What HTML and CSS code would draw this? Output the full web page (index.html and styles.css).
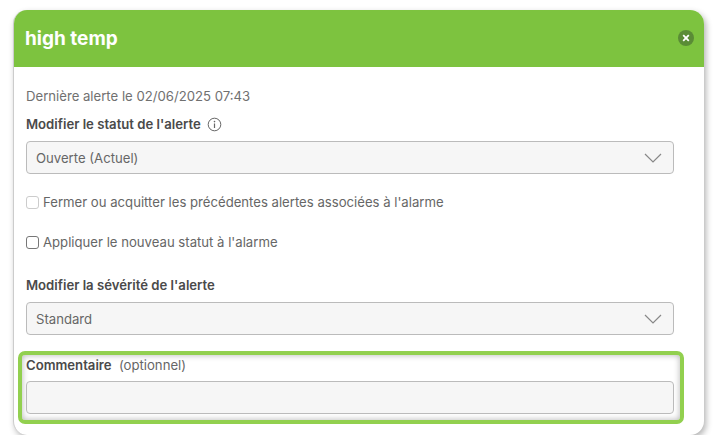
FILE: index.html
```html
<!DOCTYPE html>
<html lang="fr">
<head>
  <meta charset="UTF-8">
  <title>high temp</title>
  <link rel="stylesheet" href="styles.css">
</head>
<body>

<div class="modal">
  <div class="modal-header">
    <div class="modal-title">high temp</div>
    <div class="close-btn">
      <svg width="8" height="8" viewBox="0 0 8 8"><path d="M1.2 1.2L6.8 6.8M6.8 1.2L1.2 6.8" stroke="#fff" stroke-width="1.8" fill="none"/></svg>
    </div>
  </div>
  <div class="modal-body">
    <div class="last-alert">Dernière alerte le 02/06/2025 07:43</div>
    <div class="label label-status">
      Modifier le statut de l'alerte
      <svg class="info-icon" width="15" height="15" viewBox="0 0 15 15">
        <circle cx="7.5" cy="7.5" r="6.3" stroke="#666" stroke-width="1" fill="none"/>
        <path d="M7.5 6.6V11" stroke="#666" stroke-width="1.2" fill="none"/>
        <circle cx="7.5" cy="4.6" r="0.8" fill="#666"/>
      </svg>
    </div>
    <div class="select">
      <span>Ouverte (Actuel)</span>
      <svg width="18" height="10" viewBox="0 0 18 10"><path d="M1 1L9 9L17 1" stroke="#888" stroke-width="1.2" fill="none"/></svg>
    </div>
    <div class="check-row check-first">
      <span class="checkbox disabled"></span>
      <span>Fermer ou acquitter les précédentes alertes associées à l'alarme</span>
    </div>
    <div class="check-row check-second">
      <span class="checkbox"></span>
      <span>Appliquer le nouveau statut à l'alarme</span>
    </div>
    <div class="label label-severity">Modifier la sévérité de l'alerte</div>
    <div class="select">
      <span>Standard</span>
      <svg width="18" height="10" viewBox="0 0 18 10"><path d="M1 1L9 9L17 1" stroke="#888" stroke-width="1.2" fill="none"/></svg>
    </div>
    <div class="comment-box">
      <div class="comment-label"><b>Commentaire</b>&nbsp; (optionnel)</div>
      <div class="comment-input"></div>
    </div>
  </div>
</div>

</body>
</html>
```

FILE: styles.css
```css
body {
  margin: 0;
  padding: 10px 0 0 13px;
  background-color: #fff;
  font-family: Inter, 'Liberation Sans', sans-serif;
  font-size: 13.15px;
  color: #666;
}
.modal {
  width: 691px;
  height: 425px;
  box-sizing: border-box;
  border-radius: 14px;
  background-color: #fff;
  border-left: 1px solid #ccc;
  box-shadow: 2px 3px 6px rgba(0,0,0,0.3);
  overflow: hidden;
}
.modal-header {
  height: 57px;
  background-color: #7dc33f;
  display: flex;
  align-items: center;
  justify-content: space-between;
  padding: 0 10px 0 11px;
  box-sizing: border-box;
}
.modal-title {
  color: #fff;
  font-size: 19px;
  font-weight: 700;
}
.close-btn {
  width: 16px;
  height: 16px;
  margin-bottom: 2px;
  border-radius: 50%;
  background-color: #5a8c36;
  display: flex;
  align-items: center;
  justify-content: center;
}
.modal-body {
  padding: 21px 30px 0 12px;
}
.last-alert {
  line-height: 16px;
  color: #707070;
}
.label {
  font-weight: 600;
  color: #4a4a4a;
  line-height: 16px;
}
.label-status {
  margin-top: 12px;
  display: flex;
  align-items: center;
  gap: 6px;
}
.select {
  margin-top: 9px;
  height: 33px;
  box-sizing: border-box;
  border: 1px solid #bbb;
  border-radius: 4px;
  background-color: #f6f6f6;
  padding: 0 11px 0 9px;
  display: flex;
  align-items: center;
  justify-content: space-between;
}
.check-row {
  display: flex;
  align-items: center;
  gap: 4px;
  line-height: 16px;
}
.check-first {
  margin-top: 20px;
}
.check-second {
  margin-top: 24px;
}
.checkbox {
  width: 13px;
  height: 13px;
  box-sizing: border-box;
  border: 1px solid #777;
  border-radius: 3px;
  background-color: #fff;
}
.checkbox.disabled {
  border-color: #ccc;
}
.label-severity {
  margin-top: 27px;
}
.comment-box {
  margin: 16px -10px 0 -8px;
  height: 73px;
  box-sizing: border-box;
  border: 4px solid #92d04f;
  border-radius: 7px;
  padding: 2px 6px 0 4px;
  box-shadow: inset 0 0 6px rgba(0,0,0,0.3);
}
.comment-label {
  line-height: 16px;
  color: #666;
}
.comment-label b {
  font-weight: 600;
  color: #4a4a4a;
}
.comment-input {
  margin-top: 8px;
  height: 33px;
  box-sizing: border-box;
  border: 1px solid #bbb;
  border-radius: 4px;
  background-color: #f6f6f6;
}
```
